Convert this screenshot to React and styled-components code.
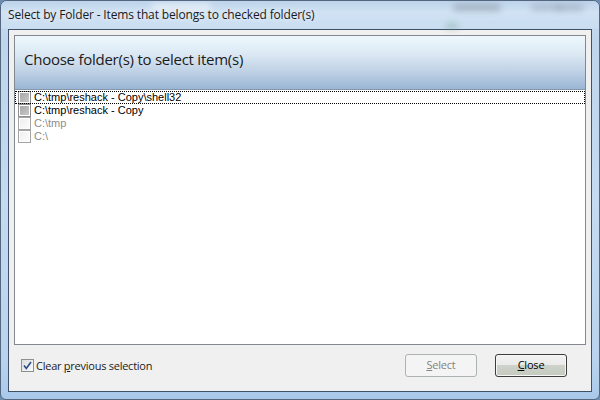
import React from "react";
import styled, { createGlobalStyle, css } from "styled-components";

const GlobalStyle = createGlobalStyle`
  html, body { margin: 0; padding: 0; background: #6d8db0; }
  body { width: 600px; height: 400px; overflow: hidden; }
  * { box-sizing: border-box; }
`;

const Window = styled.div`
  position: relative;
  width: 600px;
  height: 400px;
  display: flex;
  flex-direction: column;
  border: 1px solid #54677e;
  border-radius: 7px 7px 6px 6px;
  overflow: hidden;
  background: linear-gradient(180deg, #c9dcef 0%, #bed5ec 10%, #c4daf0 50%, #b9d3ee 90%, #a9c8ea 100%);
`;

const TitleBar = styled.div`
  position: relative;
  height: 28px;
  flex: none;
  display: flex;
  align-items: center;
  padding: 0 0 1px 7px;
  background: linear-gradient(180deg, #bdd3ea 0%, #d0e2f3 40%, #c9ddf1 100%);
`;

const Blob = styled.div`
  position: absolute;
  border-radius: 8px;
  filter: blur(3px);
  background: ${(p) => p.$c || "rgba(120,130,145,0.45)"};
`;

const TitleText = styled.span`
  position: relative;
  font-family: "Open Sans", "Noto Sans", sans-serif;
  font-size: 12px;
  color: #1a1a1a;
  letter-spacing: -0.15px;
  text-shadow: 0 0 6px rgba(255,255,255,0.9);
`;

const Client = styled.div`
  flex: 1;
  margin: 0 7px 7px 7px;
  border: 1px solid #3f5068;
  background: #f0f0f0;
  display: flex;
  flex-direction: column;
  padding: 5px 5px 0 5px;
`;

const Panel = styled.div`
  height: 310px;
  flex: none;
  border: 1px solid #828790;
  display: flex;
  flex-direction: column;
  background: #fff;
`;

const Header = styled.div`
  height: 54px;
  flex: none;
  display: flex;
  align-items: center;
  padding: 0 0 8px 9px;
  border-bottom: 1px solid #8797ab;
  background: linear-gradient(180deg, #eef8fd 0%, #dbe8f3 35%, #bccfe4 70%, #9ab6d5 100%);
`;

const HeaderText = styled.span`
  font-family: "Open Sans", "Noto Sans", sans-serif;
  font-size: 15px;
  color: #1b1b1b;
  letter-spacing: -0.25px;
`;

const List = styled.div`
  flex: 1;
  display: flex;
  flex-direction: column;
  padding-top: 1px;
  background: #fff;
`;

const Row = styled.div`
  height: 13px;
  display: flex;
  align-items: center;
  gap: 3px;
  padding-left: 3px;
  ${(p) =>
    p.$focus &&
    css`
      outline: 1px dotted #000;
      outline-offset: -1px;
    `}
`;

const Box = styled.span`
  width: 13px;
  height: 13px;
  flex: none;
  border: 1px solid ${(p) => (p.$muted ? "#a4a4a4" : "#8e8f8f")};
  background: #fff;
  display: flex;
  align-items: center;
  justify-content: center;
  &::after {
    content: "";
    width: 9px;
    height: 9px;
    ${(p) =>
      p.$grayed
        ? css`
            background: linear-gradient(135deg, #a8a8a8, #c8c8c8);
          `
        : css`
            background: linear-gradient(135deg, #e4e4e4, #fafafa);
            opacity: ${p.$muted ? 0.6 : 1};
          `}
  }
`;

const ItemText = styled.span`
  font-family: "Liberation Sans", Arial, sans-serif;
  font-size: 11px;
  line-height: 13px;
  color: ${(p) => (p.$muted ? "#8d8d8d" : "#000")};
`;

const Footer = styled.div`
  flex: 1;
  display: flex;
  align-items: center;
  padding: 0 19px 6px 7px;
  gap: 18px;
`;

const CheckLabel = styled.label`
  display: flex;
  align-items: center;
  gap: 2px;
  font-family: "Open Sans", "Noto Sans", sans-serif;
  font-size: 11px;
  color: #1b1b1b;
  letter-spacing: -0.25px;
  margin-right: auto;
  u { text-decoration: underline; text-underline-offset: 1px; }
`;

const CheckBox = styled.span`
  width: 13px;
  height: 13px;
  flex: none;
  border: 1px solid #8e8f8f;
  background: linear-gradient(135deg, #dcdcdc, #fbfbfb);
  display: flex;
  align-items: center;
  justify-content: center;
`;

const Button = styled.button`
  width: 72px;
  height: 23px;
  border-radius: 3px;
  font-family: "Open Sans", "Noto Sans", sans-serif;
  font-size: 11px;
  letter-spacing: -0.2px;
  padding: 0 0 1px;
  cursor: default;
  u { text-decoration: underline; text-underline-offset: 1px; }
  ${(p) =>
    p.disabled
      ? css`
          border: 1px solid #adb2b5;
          background: #f4f4f4;
          color: #838383;
        `
      : css`
          border: 1px solid #3c3c3c;
          color: #000;
          box-shadow: inset 0 0 0 1px #f6f6f6;
          background: linear-gradient(180deg, #f2f2f2 0%, #ebebeb 45%, #cdd2cb 50%, #c4cbbd 100%);
        `}
`;

const rows = [
  { text: "C:\\tmp\\reshack - Copy\\shell32", grayed: true, focus: true },
  { text: "C:\\tmp\\reshack - Copy", grayed: true },
  { text: "C:\\tmp", muted: true },
  { text: "C:\\", muted: true },
];

export default function App() {
  return (
    <>
      <GlobalStyle />
      <Window>
        <TitleBar>
          <Blob style={{ left: 150, top: 2, width: 60, height: 8 }} $c="rgba(255,255,255,0.5)" />
          <Blob style={{ left: 452, top: 3, width: 48, height: 7 }} />
          <Blob style={{ left: 530, top: 3, width: 30, height: 7 }} $c="rgba(120,130,145,0.3)" />
          <Blob style={{ left: 555, top: 3, width: 28, height: 7 }} $c="rgba(120,130,145,0.35)" />
          <Blob style={{ left: 445, top: 22, width: 12, height: 6 }} $c="rgba(90,150,110,0.35)" />
          <TitleText>Select by Folder - Items that belongs to checked folder(s)</TitleText>
        </TitleBar>
        <Client>
          <Panel>
            <Header>
              <HeaderText>Choose folder(s) to select item(s)</HeaderText>
            </Header>
            <List>
              {rows.map((r) => (
                <Row key={r.text} $focus={r.focus}>
                  <Box $grayed={r.grayed} $muted={r.muted} />
                  <ItemText $muted={r.muted}>{r.text}</ItemText>
                </Row>
              ))}
            </List>
          </Panel>
          <Footer>
            <CheckLabel>
              <CheckBox>
                <svg width="9" height="9" viewBox="0 0 9 9">
                  <path d="M1 4.5 L3.3 7.5 L8 1" fill="none" stroke="#2a4a8a" strokeWidth="1.6" />
                </svg>
              </CheckBox>
              <span>
                Clear <u>p</u>revious selection
              </span>
            </CheckLabel>
            <Button disabled>
              <u>S</u>elect
            </Button>
            <Button>
              <u>C</u>lose
            </Button>
          </Footer>
        </Client>
      </Window>
    </>
  );
}
